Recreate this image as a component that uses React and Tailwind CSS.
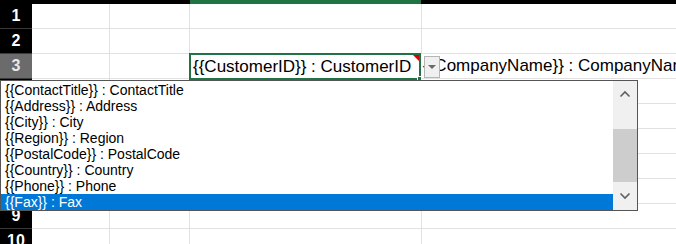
import React from 'react';

const font = { fontFamily: '"Liberation Sans", Arial, sans-serif' };

const items = [
  '{{ContactTitle}} : ContactTitle',
  '{{Address}} : Address',
  '{{City}} : City',
  '{{Region}} : Region',
  '{{PostalCode}} : PostalCode',
  '{{Country}} : Country',
  '{{Phone}} : Phone',
  '{{Fax}} : Fax',
];

const RowHeader = ({ n, active }) => (
  <div
    className={`w-[32px] shrink-0 flex items-center justify-center text-[16px] font-bold border-b border-[#3a3a3a] ${
      active ? 'bg-[#6b6b6b] text-[#e8e8e8]' : 'bg-black text-white'
    }`}
  >
    {n}
  </div>
);

const Cell = ({ w, children, className = '' }) => (
  <div className={`${w} shrink-0 border-r border-b border-[#e1e1e1] ${className}`}>{children}</div>
);

const Row = ({ n, active, children }) => (
  <div className="flex h-[25px] relative">
    <RowHeader n={n} active={active} />
    {children || (
      <>
        <Cell w="w-[78px]" />
        <Cell w="w-[80px]" />
        <Cell w="w-[232px]" />
        <div className="flex-1 border-b border-[#e1e1e1]" />
      </>
    )}
  </div>
);

export default function App() {
  return (
    <div className="w-[676px] h-[244px] overflow-hidden bg-white relative" style={font}>
      {/* column header bottom strip */}
      <div className="flex h-[4px]">
        <div className="w-[190px] bg-black" />
        <div className="w-[231px] bg-[#217346]" />
        <div className="flex-1 bg-black" />
      </div>

      <Row n={1} />
      <Row n={2} />
      <Row n={3} active>
        <Cell w="w-[78px]" />
        <Cell w="w-[80px]" />
        <div className="w-[232px] shrink-0 relative z-10 border-2 border-[#217346] -my-px -ml-px bg-white flex items-end pb-[1px] pl-[2px] text-[17px] leading-[20px] text-black whitespace-nowrap">
          {'{{CustomerID}} : CustomerID'}
          <div className="absolute top-0 right-0 w-0 h-0 border-t-[6px] border-l-[6px] border-t-[#e00000] border-l-transparent" />
          <div className="absolute -bottom-[3px] -right-[3px] w-[5px] h-[5px] bg-[#217346] border border-white" />
        </div>
        <div className="flex-1 border-b border-[#e1e1e1] relative flex items-end pb-[2px] pl-[2px] text-[17px] leading-[20px] text-black whitespace-nowrap overflow-hidden">
          {'{{CompanyName}} : CompanyName'}
        </div>
        <div className="absolute z-20 left-[424px] top-[2px] w-[16px] h-[22px] bg-[#f0f0f0] border border-[#b5b5b5] flex items-center justify-center">
          <div className="w-0 h-0 border-l-[4px] border-r-[4px] border-t-[4px] border-l-transparent border-r-transparent border-t-[#6a6a6a]" />
        </div>
      </Row>
      <Row n={4} />
      <Row n={5} />
      <Row n={6} />
      <Row n={7} />
      <Row n={8} />
      <Row n={9} />
      <Row n={10} />

      {/* autocomplete dropdown */}
      <div className="absolute z-30 left-0 top-[80px] w-[638px] h-[131px] bg-white border border-[#555] flex">
        <div className="flex-1 pt-px">
          {items.map((t, i) => (
            <div
              key={t}
              className={`h-[16px] leading-[16px] pl-[4px] text-[14px] whitespace-nowrap ${
                i === items.length - 1 ? 'bg-[#0078d7] text-white' : 'text-black'
              }`}
            >
              {t}
            </div>
          ))}
        </div>
        <div className="w-[24px] bg-[#f0f0f0] flex flex-col">
          <div className="h-[48px] flex items-start justify-center pt-[9px]">
            <svg width="12" height="8" viewBox="0 0 12 8">
              <path d="M1.5 6.5 L6 2 L10.5 6.5" fill="none" stroke="#606060" strokeWidth="1.6" />
            </svg>
          </div>
          <div className="h-[53px] bg-[#cdcdcd]" />
          <div className="flex-1 flex items-center justify-center">
            <svg width="12" height="8" viewBox="0 0 12 8">
              <path d="M1.5 1.5 L6 6 L10.5 1.5" fill="none" stroke="#606060" strokeWidth="1.6" />
            </svg>
          </div>
        </div>
      </div>
    </div>
  );
}
